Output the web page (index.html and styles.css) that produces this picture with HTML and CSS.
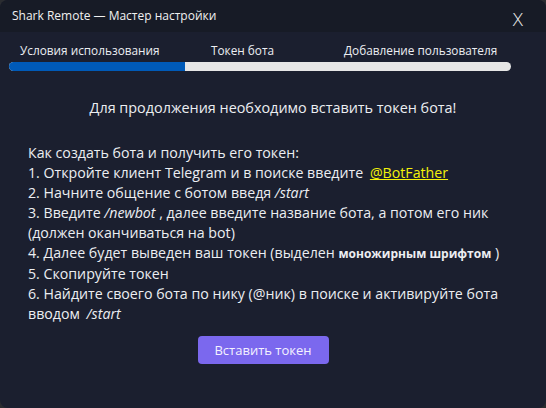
FILE: index.html
```html
<!DOCTYPE html>
<html lang="ru">
<head>
<meta charset="utf-8">
<link rel="stylesheet" href="styles.css">
</head>
<body>
<div class="window">
  <div class="titlebar">
    <span class="title">Shark Remote — Мастер настройки</span>
    <span class="close">X</span>
  </div>
  <div class="content">
    <div class="steps">
      <span>Условия использования</span>
      <span>Токен бота</span>
      <span>Добавление пользователя</span>
    </div>
    <div class="progress"><div class="fill"></div></div>
    <p class="heading">Для продолжения необходимо вставить токен бота!</p>
    <div class="guide">
      <div>Как создать бота и получить его токен:</div>
      <div>1. Откройте клиент Telegram и в поиске введите <a class="link">@BotFather</a></div>
      <div>2. Начните общение с ботом введя <i>/start</i></div>
      <div>3. Введите <i>/newbot</i> , далее введите название бота, а потом его ник</div>
      <div>(должен оканчиваться на bot)</div>
      <div>4. Далее будет выведен ваш токен (выделен <b class="mono">моножирным шрифтом</b> )</div>
      <div>5. Скопируйте токен</div>
      <div>6. Найдите своего бота по нику (@ник) в поиске и активируйте бота</div>
      <div>вводом <i class="gap">/start</i></div>
    </div>
    <div class="actions"><button class="btn">Вставить токен</button></div>
  </div>
</div>
</body>
</html>
```
FILE: styles.css
```css
html, body {
  margin: 0;
  padding: 0;
  background: #2a2c30;
  width: 546px;
  height: 408px;
  overflow: hidden;
}
.window {
  width: 546px;
  height: 408px;
  background: #1b1f2f;
  border-radius: 8px;
  overflow: hidden;
  font-family: "Open Sans", "Noto Sans", sans-serif;
  color: #eceef2;
  display: flex;
  flex-direction: column;
}
.titlebar {
  height: 32px;
  background: #171b26;
  display: flex;
  align-items: center;
  justify-content: space-between;
  padding: 0 23px 0 12px;
  flex-shrink: 0;
}
.title {
  font-size: 12px;
  color: #f0f0f0;
  position: relative;
  top: -1px;
}
.close {
  font-size: 19px;
  color: #e8e8e8;
  font-weight: 300;
  position: relative;
  top: 3px;
}
.content {
  display: flex;
  flex-direction: column;
}
.steps {
  display: grid;
  grid-template-columns: 191px 133px auto;
  font-size: 11.8px;
  padding: 7px 0 0 20px;
  height: 22px;
  line-height: 22px;
}
.progress {
  margin: 1px 35px 0 9px;
  height: 9px;
  border-radius: 5px;
  background: #e6e6e6;
  overflow: hidden;
}
.fill {
  width: 176px;
  height: 100%;
  background: #005ab8;
}
.heading {
  margin: 27px 0 0 0;
  text-align: center;
  font-size: 14.4px;
  line-height: 20px;
}
.guide {
  margin: 25px 0 0 28px;
  font-size: 14.2px;
  line-height: 20px;
}
.link {
  color: #f4f20a;
  text-decoration: underline;
  margin-left: 3px;
}
.gap {
  margin-left: 3px;
}
.mono {
  font-size: 12px;
  font-weight: 700;
}
.actions {
  display: flex;
  justify-content: center;
  margin-top: 12px;
  padding-right: 20px;
}
.btn {
  width: 131px;
  height: 28px;
  border: none;
  border-radius: 4px;
  background: #7b68ee;
  color: #f4f2ff;
  font-family: inherit;
  font-size: 13px;
}
```
